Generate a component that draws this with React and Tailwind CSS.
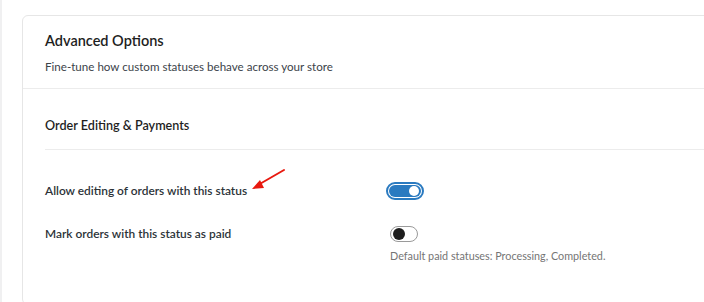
export default function App() {
  return (
    <div
      className="relative h-[302px] w-[704px] overflow-hidden bg-white border-l-2 border-[#f0f0f1]"
      style={{ fontFamily: 'Lato, "Noto Sans", sans-serif' }}
    >
      <div className="ml-[20px] mt-[15px] w-[720px] rounded-md border border-[#e6e6e6] bg-white">
        {/* Card header */}
        <div className="border-b border-[#ececec] px-[22px] pt-[14px] pb-[11px]">
          <h2 className="text-[14.5px] leading-[22px] font-semibold text-[#1e1e1e]">Advanced Options</h2>
          <p className="mt-[5px] text-[11.6px] leading-[20px] text-[#3c434a]">
            Fine-tune how custom statuses behave across your store
          </p>
        </div>

        {/* Section */}
        <div className="px-[22px]">
          <div className="border-b border-[#ececec] pt-[26px] pb-[12px]">
            <h3 className="text-[12.6px] leading-[22px] font-semibold text-[#1e1e1e]">Order Editing &amp; Payments</h3>
          </div>

          <div className="pt-[31px] pb-[40px]">
            <div className="flex items-center">
              <span className="w-[341px] text-[11.9px] leading-[20px] font-semibold text-[#2c3338]">
                Allow editing of orders with this status
              </span>
              <span className="flex h-[18px] w-[38px] items-center rounded-full border-2 border-[#2a7ac0] p-[1px]">
                <span className="flex h-full w-full items-center justify-end rounded-full bg-[#2a7ac0] pr-[2px]">
                  <span className="h-[10px] w-[10px] rounded-full bg-white" />
                </span>
              </span>
            </div>

            <div className="mt-[23px] flex items-start">
              <span className="w-[345px] text-[11.9px] leading-[20px] font-semibold text-[#2c3338]">
                Mark orders with this status as paid
              </span>
              <div className="flex flex-col">
                <span className="mt-[2px] flex h-[16px] w-[28px] items-center rounded-full border border-[#9a9a9a] bg-white pl-[2px]">
                  <span className="h-[12px] w-[12px] rounded-full bg-[#1e1e1e]" />
                </span>
                <span className="mt-[6px] text-[10.8px] leading-[16px] text-[#757575]">
                  Default paid statuses: Processing, Completed.
                </span>
              </div>
            </div>
          </div>
        </div>
      </div>

      {/* annotation arrow */}
      <svg className="absolute left-[246px] top-[166px]" width="42" height="30" viewBox="0 0 42 30">
        <line x1="36" y1="4" x2="10" y2="19" stroke="#e8190f" strokeWidth="2" strokeLinecap="round" />
        <polygon points="4,23 12,14 16,22" fill="#e8190f" />
      </svg>
    </div>
  )
}
